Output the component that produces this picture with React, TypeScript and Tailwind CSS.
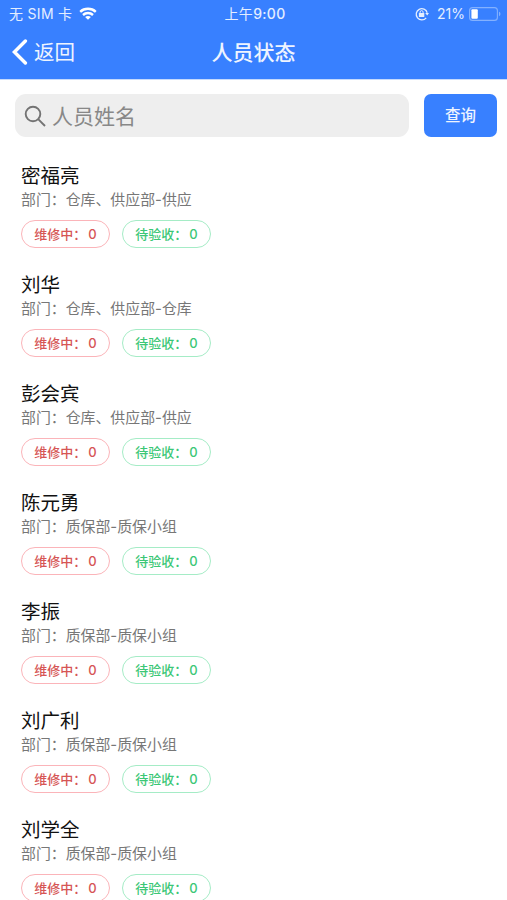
import React, { useState } from 'react';

interface Person {
  id: number;
  name: string;
  department: string;
  repairing: number;
  pending: number;
}

const people: Person[] = [
  { id: 1, name: '密福亮', department: '仓库、供应部-供应', repairing: 0, pending: 0 },
  { id: 2, name: '刘华', department: '仓库、供应部-仓库', repairing: 0, pending: 0 },
  { id: 3, name: '彭会宾', department: '仓库、供应部-供应', repairing: 0, pending: 0 },
  { id: 4, name: '陈元勇', department: '质保部-质保小组', repairing: 0, pending: 0 },
  { id: 5, name: '李振', department: '质保部-质保小组', repairing: 0, pending: 0 },
  { id: 6, name: '刘广利', department: '质保部-质保小组', repairing: 0, pending: 0 },
  { id: 7, name: '刘学全', department: '质保部-质保小组', repairing: 0, pending: 0 },
];

const WifiIcon = () => (
  <svg className="ml-[7px] h-[13px] w-[18px]" viewBox="0 0 18 13" fill="none" stroke="#fff" strokeWidth="2.4">
    <path d="M1.2 4.8C5.5.8 12.5.8 16.8 4.8" />
    <path d="M4 8c2.8-2.6 7.2-2.6 10 0" />
    <path d="M9 12.8 6.1 10c1.6-1.4 4.2-1.4 5.8 0z" fill="#fff" stroke="none" />
  </svg>
);

const RotationLockIcon = () => (
  <svg className="h-[14px] w-[14px]" viewBox="0 0 14 14" fill="none" stroke="currentColor" strokeWidth="1.3">
    <path d="M11.2 10.8A5.6 5.6 0 1 1 12.2 5.8" />
    <path d="M10.2 6h3.8l-1.8 2.6z" fill="currentColor" stroke="none" />
    <rect x="3.9" y="6.1" width="5.4" height="4" rx=".5" fill="currentColor" stroke="none" />
    <path d="M5.1 6.4V5.1a1.5 1.5 0 0 1 3 0v1.3" strokeWidth="1" />
  </svg>
);

const BatteryIcon = () => (
  <svg className="ml-1 h-[14px] w-[32px]" viewBox="0 0 32 14" fill="none">
    <rect x=".6" y=".6" width="27.8" height="12.8" rx="3" stroke="#83b1ff" strokeWidth="1.1" />
    <rect x="2.4" y="2.3" width="6.4" height="9.4" rx="1" fill="#fff" />
    <path d="M30 4.8c1.9.6 1.9 3.8 0 4.4z" fill="#83b1ff" />
  </svg>
);

const StatusBar = () => (
  <div className="grid h-[27px] grid-cols-3 items-center pl-[9px] pr-[6px] text-[14px] text-[#e4eeff]">
    <div className="flex items-center tracking-[0.3px]">
      无 SIM 卡
      <WifiIcon />
    </div>
    <div className="text-center tracking-[0.3px]">
      上午<span className="font-medium">9:00</span>
    </div>
    <div className="flex items-center justify-end">
      <RotationLockIcon />
      <span className="ml-2">21%</span>
      <BatteryIcon />
    </div>
  </div>
);

const PersonItem: React.FC<{ person: Person }> = ({ person }) => (
  <li className="h-[109px] pl-[21px] pt-[9px]">
    <h2 className="text-[19.5px] leading-[26px] text-[#111]">{person.name}</h2>
    <p className="text-[14.9px] leading-[22px] text-[#777]">部门：{person.department}</p>
    <div className="mt-[9px] flex gap-3 text-[13px] font-medium">
      <span className="flex h-[28px] w-[89px] items-center justify-center rounded-full border border-[#fbb4b9] pt-px text-[#d65555]">
        维修中：<span className="ml-[2px]">{person.repairing}</span>
      </span>
      <span className="flex h-[28px] w-[89px] items-center justify-center rounded-full border border-[#a5ecc6] pt-px text-[#3cc776]">
        待验收：<span className="ml-[2px]">{person.pending}</span>
      </span>
    </div>
  </li>
);

export default function App() {
  const [keyword, setKeyword] = useState('');
  const [query, setQuery] = useState('');

  const visible = people.filter(p => p.name.includes(query));

  return (
    <div className="h-screen overflow-hidden bg-white font-['Inter','Noto_Sans_CJK_SC',sans-serif]">
      <header className="h-[80px] border-b border-[#c5dafd] bg-[#3880ff]">
        <StatusBar />
        <div className="grid h-[50px] grid-cols-3 items-center text-[#eef4ff]">
          <button className="flex items-center pl-3 text-[20.5px]">
            <svg className="mr-[6px] h-[26px] w-[16px]" viewBox="0 0 16 26" fill="none" stroke="#fff" strokeWidth="3.4" strokeLinecap="round">
              <path d="M13.4 2 2.4 13l11 11" />
            </svg>
            <span className="pt-[2px]">返回</span>
          </button>
          <h1 className="pt-[2px] text-center text-[21px] font-medium">人员状态</h1>
        </div>
      </header>

      <form
        className="flex h-[74px] items-start gap-[15px] pl-[15px] pr-[10px] pt-[14px]"
        onSubmit={e => {
          e.preventDefault();
          setQuery(keyword.trim());
        }}
      >
        <label className="flex h-[43px] min-w-0 flex-1 items-center rounded-[11px] bg-[#eee] pl-[9px]">
          <svg className="h-[22px] w-[22px] shrink-0" viewBox="0 0 22 22" fill="none" stroke="#737373" strokeWidth="1.9">
            <circle cx="9" cy="9" r="7.3" />
            <path d="m14.2 14.2 6.8 6.8" />
          </svg>
          <input
            className="ml-[6px] min-w-0 flex-1 bg-transparent pt-[2px] text-[21px] text-[#555] outline-none placeholder:text-[#888]"
            placeholder="人员姓名"
            value={keyword}
            onChange={e => setKeyword(e.target.value)}
          />
        </label>
        <button type="submit" className="h-[43px] w-[73px] rounded-[7px] bg-[#3880ff] pt-px text-[15.5px] font-medium text-[#eef4ff]">
          查询
        </button>
      </form>

      <ul>
        {visible.map(person => (
          <PersonItem key={person.id} person={person} />
        ))}
      </ul>
    </div>
  );
}
